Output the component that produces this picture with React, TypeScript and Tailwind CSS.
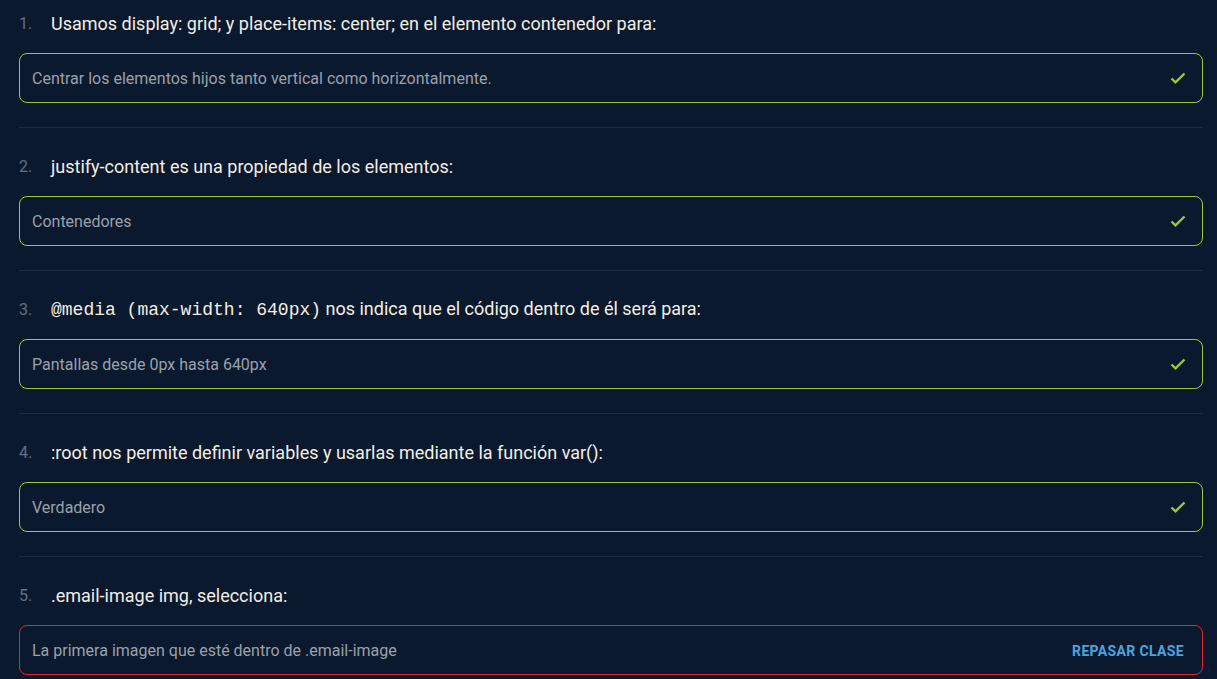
import type { ReactNode } from "react";

type Answer = {
  id: number;
  question: ReactNode;
  answer: string;
  correct: boolean;
};

const answers: Answer[] = [
  {
    id: 1,
    question: "Usamos display: grid; y place-items: center; en el elemento contenedor para:",
    answer: "Centrar los elementos hijos tanto vertical como horizontalmente.",
    correct: true,
  },
  {
    id: 2,
    question: "justify-content es una propiedad de los elementos:",
    answer: "Contenedores",
    correct: true,
  },
  {
    id: 3,
    question: (
      <>
        <code className="font-['Liberation_Mono',monospace] text-[18px]">@media (max-width: 640px)</code> nos indica
        que el código dentro de él será para:
      </>
    ),
    answer: "Pantallas desde 0px hasta 640px",
    correct: true,
  },
  {
    id: 4,
    question: ":root nos permite definir variables y usarlas mediante la función var():",
    answer: "Verdadero",
    correct: true,
  },
  {
    id: 5,
    question: ".email-image img, selecciona:",
    answer: "La primera imagen que esté dentro de .email-image",
    correct: false,
  },
];

function CheckIcon() {
  return (
    <svg viewBox="0 0 16 16" className="h-[16px] w-[16px]" fill="none" stroke="#a3c53b" strokeWidth={2.4}>
      <path d="M1.5 8.5 5.5 12.3 14.5 3.5" />
    </svg>
  );
}

function AnswerRow({ item, last }: { item: Answer; last: boolean }) {
  return (
    <li className={last ? "" : "border-b border-[#1d2c42] pb-[24px]"}>
      <div className="flex h-[24px] items-center pt-[1px] text-[18px] leading-[24px]">
        <span className="w-[32px] shrink-0 text-[16px] text-[#637083]">{item.id}.</span>
        <p className="text-[#f3eee2]">{item.question}</p>
      </div>
      <div
        className={`mt-[18px] flex h-[50px] items-center justify-between rounded-[8px] border pl-[12px] pr-[16px] ${
          item.correct ? "border-[#a3c53b]" : "border-[#e3262b]"
        }`}
      >
        <span className="pt-[2px] text-[16px] text-[#9aa1aa]">{item.answer}</span>
        {item.correct ? (
          <CheckIcon />
        ) : (
          <button
            type="button"
            className="pr-[2px] pt-[2px] text-[14px] font-bold uppercase tracking-[0.025em] text-[#4ca4de]"
          >
            Repasar clase
          </button>
        )}
      </div>
    </li>
  );
}

export default function App() {
  return (
    <div className="h-[679px] overflow-hidden bg-[#0b192f] font-['Roboto',sans-serif]">
      <ol className="flex flex-col gap-[26px] pl-[19px] pr-[14px] pt-[11px]">
        {answers.map((item, index) => (
          <AnswerRow key={item.id} item={item} last={index === answers.length - 1} />
        ))}
      </ol>
    </div>
  );
}
